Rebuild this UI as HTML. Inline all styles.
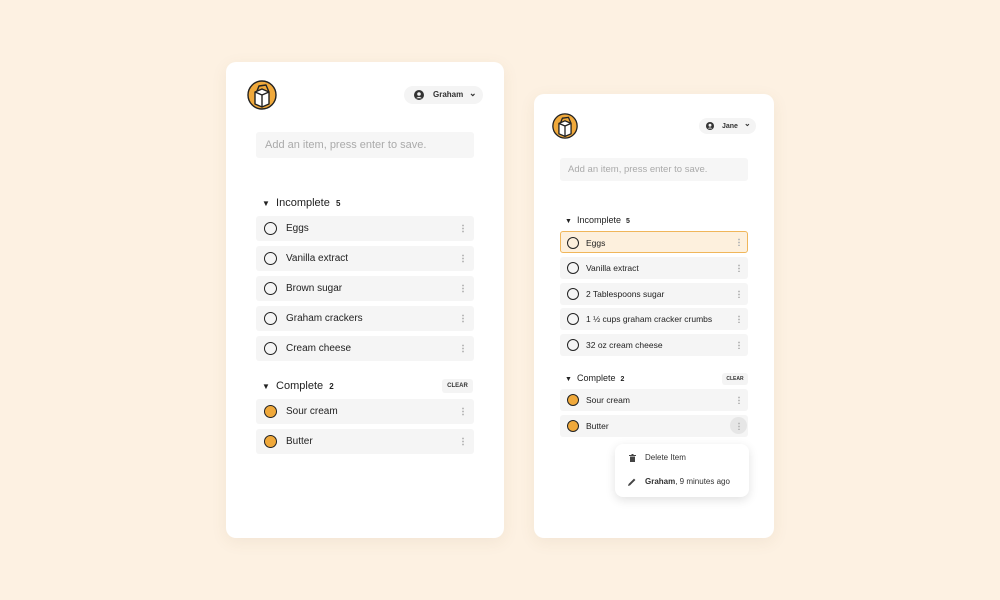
<!DOCTYPE html>
<html><head><meta charset="utf-8"><style>
*{box-sizing:border-box;margin:0;padding:0}
body{width:1000px;height:600px;background:#fdf1e2;position:relative;overflow:hidden;font-family:"Liberation Sans",sans-serif;color:#222}
.card{position:absolute;background:#fff;border-radius:10px;box-shadow:0 4px 16px rgba(120,90,50,.08)}
.a{position:absolute;line-height:1}
.item{position:absolute;background:#f5f5f5;border-radius:3px}
.c{position:absolute;border:1.6px solid #222;border-radius:50%}
.f{background:#f0a93b}
.dl{position:absolute;width:2px;height:9px;background:radial-gradient(circle,#bbb 0.9px,transparent 1px) 0 0/2px 3px repeat-y}
.pill{position:absolute;background:#f4f4f4;border-radius:10px;font-weight:bold;color:#333}
</style></head><body>

<!-- LEFT CARD -->
<div class="card" style="left:226px;top:62px;width:278px;height:476px"></div>
<svg class="a" style="left:247px;top:80px" width="30" height="30" viewBox="0 0 30 30"><circle cx="15" cy="15" r="14" fill="#f0a93b" stroke="#222" stroke-width="1.4"/><path d="M8 12 L15 9 L22 12 L22 24 L15 27 L8 24 Z" fill="#fff" stroke="#222" stroke-width="1.4" stroke-linejoin="round"/><path d="M8 12 L15 15 L22 12 M15 15 L15 27 M10 11 L12 6 L19 5 L22 12" fill="none" stroke="#222" stroke-width="1.4" stroke-linejoin="round"/></svg>
<div class="pill" style="left:404px;top:86px;width:79px;height:18px;font-size:8px">
 <svg class="a" style="left:10px;top:4px" width="10" height="10" viewBox="0 0 10 10"><circle cx="5" cy="5" r="5" fill="#333"/><circle cx="5" cy="4" r="1.8" fill="#f4f4f4"/><path d="M2 8.2 Q5 5.6 8 8.2" fill="#f4f4f4"/></svg>
 <span class="a" style="left:29px;top:5px">Graham</span><span class="a" style="left:65px;top:3px;font-size:9px">&#8964;</span></div>
<div class="item" style="left:256px;top:132px;width:218px;height:26px;background:#f6f6f6"><span class="a" style="left:9px;top:8px;font-size:11px;color:#aaa">Add an item, press enter to save.</span></div>
<div class="a" style="left:262px;top:198px;font-size:11px"><span style="font-size:8px">&#9660;</span>&nbsp; Incomplete &nbsp;<b style="font-size:8px">5</b></div>
<div class="item" style="left:256px;top:216px;width:218px;height:25px"><div class="c" style="left:8px;top:6px;width:13px;height:13px"></div><span class="a" style="left:30px;top:8px;font-size:10px">Eggs</span><div class="dl" style="left:206px;top:8px"></div></div>
<div class="item" style="left:256px;top:246px;width:218px;height:25px"><div class="c" style="left:8px;top:6px;width:13px;height:13px"></div><span class="a" style="left:30px;top:8px;font-size:10px">Vanilla extract</span><div class="dl" style="left:206px;top:8px"></div></div>
<div class="item" style="left:256px;top:276px;width:218px;height:25px"><div class="c" style="left:8px;top:6px;width:13px;height:13px"></div><span class="a" style="left:30px;top:8px;font-size:10px">Brown sugar</span><div class="dl" style="left:206px;top:8px"></div></div>
<div class="item" style="left:256px;top:306px;width:218px;height:25px"><div class="c" style="left:8px;top:6px;width:13px;height:13px"></div><span class="a" style="left:30px;top:8px;font-size:10px">Graham crackers</span><div class="dl" style="left:206px;top:8px"></div></div>
<div class="item" style="left:256px;top:336px;width:218px;height:25px"><div class="c" style="left:8px;top:6px;width:13px;height:13px"></div><span class="a" style="left:30px;top:8px;font-size:10px">Cream cheese</span><div class="dl" style="left:206px;top:8px"></div></div>
<div class="a" style="left:262px;top:381px;font-size:11px"><span style="font-size:8px">&#9660;</span>&nbsp; Complete &nbsp;<b style="font-size:8px">2</b></div>
<div class="pill" style="left:442px;top:379px;width:31px;height:14px;border-radius:3px;font-size:6px;text-align:center;line-height:14px">CLEAR</div>
<div class="item" style="left:256px;top:399px;width:218px;height:25px"><div class="c f" style="left:8px;top:6px;width:13px;height:13px"></div><span class="a" style="left:30px;top:8px;font-size:10px">Sour cream</span><div class="dl" style="left:206px;top:8px"></div></div>
<div class="item" style="left:256px;top:429px;width:218px;height:25px"><div class="c f" style="left:8px;top:6px;width:13px;height:13px"></div><span class="a" style="left:30px;top:8px;font-size:10px">Butter</span><div class="dl" style="left:206px;top:8px"></div></div>

<!-- RIGHT CARD -->
<div class="card" style="left:534px;top:94px;width:240px;height:444px"></div>
<svg class="a" style="left:552px;top:113px" width="26" height="26" viewBox="0 0 30 30"><circle cx="15" cy="15" r="14" fill="#f0a93b" stroke="#222" stroke-width="1.5"/><path d="M8 12 L15 9 L22 12 L22 24 L15 27 L8 24 Z" fill="#fff" stroke="#222" stroke-width="1.5" stroke-linejoin="round"/><path d="M8 12 L15 15 L22 12 M15 15 L15 27 M10 11 L12 6 L19 5 L22 12" fill="none" stroke="#222" stroke-width="1.5" stroke-linejoin="round"/></svg>
<div class="pill" style="left:699px;top:118px;width:57px;height:16px;font-size:7px">
 <svg class="a" style="left:7px;top:4px" width="8" height="8" viewBox="0 0 10 10"><circle cx="5" cy="5" r="5" fill="#333"/><circle cx="5" cy="4" r="1.8" fill="#f4f4f4"/><path d="M2 8.2 Q5 5.6 8 8.2" fill="#f4f4f4"/></svg>
 <span class="a" style="left:23px;top:5px">Jane</span><span class="a" style="left:45px;top:2px;font-size:8px">&#8964;</span></div>
<div class="item" style="left:560px;top:158px;width:188px;height:23px;background:#f6f6f6"><span class="a" style="left:8px;top:7px;font-size:9.5px;color:#aaa">Add an item, press enter to save.</span></div>
<div class="a" style="left:565px;top:216px;font-size:9px"><span style="font-size:7px">&#9660;</span>&nbsp; Incomplete &nbsp;<b style="font-size:7px">5</b></div>
<div class="item" style="left:560px;top:231px;width:188px;height:22px;background:#fdf0dd;border:1.3px solid #f0b65a"><div class="c" style="left:6px;top:4.5px;width:12px;height:12px"></div><span class="a" style="left:25px;top:7px;font-size:8.5px">Eggs</span><div class="dl" style="left:177px;top:6px;height:8px"></div></div>
<div class="item" style="left:560px;top:257px;width:188px;height:22px"><div class="c" style="left:7px;top:5px;width:12px;height:12px"></div><span class="a" style="left:26px;top:7px;font-size:8.5px">Vanilla extract</span><div class="dl" style="left:178px;top:7px;height:8px"></div></div>
<div class="item" style="left:560px;top:283px;width:188px;height:22px"><div class="c" style="left:7px;top:5px;width:12px;height:12px"></div><span class="a" style="left:26px;top:7px;font-size:8.5px">2 Tablespoons sugar</span><div class="dl" style="left:178px;top:7px;height:8px"></div></div>
<div class="item" style="left:560px;top:308px;width:188px;height:22px"><div class="c" style="left:7px;top:5px;width:12px;height:12px"></div><span class="a" style="left:26px;top:7px;font-size:8.5px">1 ½ cups graham cracker crumbs</span><div class="dl" style="left:178px;top:7px;height:8px"></div></div>
<div class="item" style="left:560px;top:334px;width:188px;height:22px"><div class="c" style="left:7px;top:5px;width:12px;height:12px"></div><span class="a" style="left:26px;top:7px;font-size:8.5px">32 oz cream cheese</span><div class="dl" style="left:178px;top:7px;height:8px"></div></div>
<div class="a" style="left:565px;top:374px;font-size:9px"><span style="font-size:7px">&#9660;</span>&nbsp; Complete &nbsp;<b style="font-size:7px">2</b></div>
<div class="pill" style="left:722px;top:373px;width:26px;height:12px;border-radius:3px;font-size:5px;text-align:center;line-height:12px">CLEAR</div>
<div class="item" style="left:560px;top:389px;width:188px;height:22px"><div class="c f" style="left:7px;top:5px;width:12px;height:12px"></div><span class="a" style="left:26px;top:7px;font-size:8.5px">Sour cream</span><div class="dl" style="left:178px;top:7px;height:8px"></div></div>
<div class="item" style="left:560px;top:415px;width:188px;height:22px"><div class="c f" style="left:7px;top:5px;width:12px;height:12px"></div><span class="a" style="left:26px;top:7px;font-size:8.5px">Butter</span><div class="a" style="left:170px;top:2px;width:17px;height:17px;border-radius:50%;background:#e6e6e6"></div><div class="dl" style="left:178px;top:7px;height:8px"></div></div>
<div class="card" style="left:615px;top:444px;width:134px;height:53px;border-radius:8px;box-shadow:0 3px 10px rgba(0,0,0,.12)">
 <svg class="a" style="left:14px;top:10px" width="7" height="8" viewBox="0 0 7 8"><rect x="0" y="1" width="7" height="1" fill="#444"/><rect x="2.5" y="0" width="2" height="1" fill="#444"/><rect x="1" y="2.5" width="5" height="5.5" fill="#444"/></svg>
 <span class="a" style="left:30px;top:10px;font-size:8px;color:#333">Delete Item</span>
 <svg class="a" style="left:13px;top:34px" width="8" height="8" viewBox="0 0 8 8"><path d="M0 8 L0.6 6 L6 0.6 L7.4 2 L2 7.4 Z" fill="#444"/></svg>
 <span class="a" style="left:30px;top:34px;font-size:8px;color:#333"><b>Graham</b>, 9 minutes ago</span>
</div>
</body></html>
